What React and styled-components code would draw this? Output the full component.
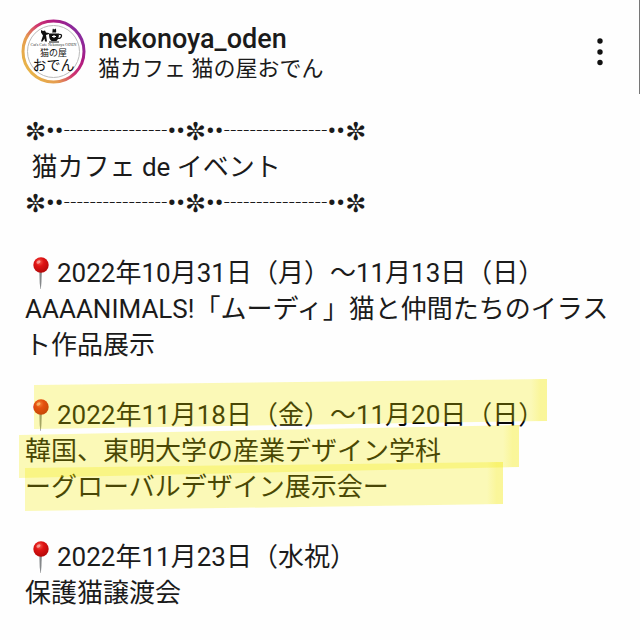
import React from 'react'
import styled, { createGlobalStyle } from 'styled-components'

const GlobalStyle = createGlobalStyle`
  * {
    box-sizing: border-box;
  }
  body {
    margin: 0;
    background: #fefefe;
    color: #1b1b1b;
    font-family: Roboto, "Noto Sans CJK JP", "DejaVu Sans", sans-serif;
  }
`

const Page = styled.div`
  position: relative;
  overflow: hidden;
`

const Header = styled.header`
  display: flex;
  align-items: flex-start;
  gap: 12px;
  padding: 19px 24px 0 21px;
  height: 113px;
`

const AvatarSvg = styled.svg`
  width: 65px;
  height: 65px;
  flex: none;
`

const Names = styled.div`
  flex: 1;
  min-width: 0;
  padding-top: 5px;
`

const UserName = styled.h1`
  margin: 0;
  font-size: 27px;
  line-height: 30px;
  font-weight: 500;
`

const SubTitle = styled.p`
  margin: 0;
  font-size: 22px;
  line-height: 30px;
`

const MenuButton = styled.button`
  width: 32px;
  height: 44px;
  margin-top: 11px;
  padding: 0;
  border: none;
  background: none;
  color: #111;
  cursor: pointer;
`

const Post = styled.main`
  display: flex;
  flex-direction: column;
  gap: 34px;
  padding: 0 24px 28px 25px;
`

const Block = styled.section`
  position: relative;
  font-size: 26px;
  line-height: 36px;
  color: ${(p) => (p.$marked ? '#080808' : 'inherit')};
`

const Line = styled.p`
  margin: 0;
  height: 36px;
  white-space: pre;
`

const OrnamentLine = styled(Line)`
  line-height: 32px;
`

const Asterisk = styled.span`
  font-family: "DejaVu Sans", sans-serif;
  font-size: 25px;
`

const Dashes = styled.span`
  font-family: "Noto Sans CJK JP", sans-serif;
`

const PinSvg = styled.svg`
  width: 32px;
  height: 36px;
  vertical-align: top;
`

const Marker = styled.svg`
  position: absolute;
  left: -25px;
  top: -20px;
  width: 560px;
  height: 140px;
  pointer-events: none;
`

const ScrollMark = styled.div`
  position: absolute;
  top: 0;
  right: 0;
  width: 1px;
  height: 94px;
  background: #777;
`

const Avatar = () => (
  <AvatarSvg viewBox="0 0 65 65" role="img" aria-label="nekonoya_oden">
    <defs>
      <linearGradient id="ring" x1="0.05" y1="0.8" x2="0.9" y2="0.2">
        <stop offset="0" stopColor="#e8b548" />
        <stop offset="0.3" stopColor="#e59a50" />
        <stop offset="0.55" stopColor="#d0366f" />
        <stop offset="0.8" stopColor="#b01a80" />
        <stop offset="1" stopColor="#8a2a9c" />
      </linearGradient>
    </defs>
    <circle cx="32.5" cy="32.5" r="30.5" fill="#fff" stroke="url(#ring)" strokeWidth="3" />
    <circle cx="32.5" cy="32.5" r="26" fill="none" stroke="#bbb" strokeWidth="1" />
    {/* cat leaning on the cup */}
    <path d="M20 11l2 1 2-0.500 1 2 3 0.500v1l-3 1 1 6.500h-2l-0.500-3-2 3h-1.500l2-6-2-3z" fill="#111" />
    <path d="M28 14.500h10c0 4-1 6-2.500 7.500h-5c-2-1.500-2.500-3.500-2.500-7.500z" fill="#111" />
    <path d="M38 15.500c4-1 3 4-1 4" fill="none" stroke="#111" strokeWidth="1.200" />
    <path d="M31 13.500c1-1 0-2.500 1-4l1 1 2-1c0 2 0.500 3 0 4z" fill="#111" />
    <path d="M28 23h10" stroke="#111" strokeWidth="1" />
    <path d="M31 17.500h4M33 16v3" stroke="#fff" strokeWidth="1" />
    <text x="32.5" y="27" fontSize="4" textAnchor="middle" fill="#333" fontFamily="Liberation Serif, serif">Cat's Cafe Nekonoya ODEN</text>
    <text x="32.5" y="37" fontSize="9" textAnchor="middle" fill="#111" fontFamily="Noto Sans CJK JP, sans-serif">猫の屋</text>
    <text x="32.5" y="51" fontSize="14" textAnchor="middle" fill="#111" fontFamily="Noto Sans CJK JP, sans-serif">おでん</text>
  </AvatarSvg>
)

const Pin = () => (
  <PinSvg viewBox="0 0 32 36" aria-hidden="true">
    <defs>
      <radialGradient id="pinHead" cx="0.4" cy="0.3" r="0.7">
        <stop offset="0" stopColor="#f4594a" />
        <stop offset="0.4" stopColor="#df1414" />
        <stop offset="1" stopColor="#b50909" />
      </radialGradient>
    </defs>
    <path d="M14.300 15h2.600l-0.500 13-0.600 6h-0.400l-0.700-6z" fill="#85888a" />
    <circle cx="16" cy="10" r="7.700" fill="url(#pinHead)" />
    <ellipse cx="13.500" cy="7" rx="2.200" ry="1.500" fill="#fff" opacity="0.45" transform="rotate(-35 13.500 7)" />
  </PinSvg>
)

const Divider = () => (
  <OrnamentLine>
    <Asterisk>✼</Asterisk>••<Dashes>┈┈┈┈</Dashes>••
    <Asterisk>✼</Asterisk>••<Dashes>┈┈┈┈</Dashes>••
    <Asterisk>✼</Asterisk>
  </OrnamentLine>
)

// three pen strokes, each with a wetter right end
const strokes = [
  { body: '34,18 547,12 547,54 34,62', end: '531,12 547,12 547,54 531,54' },
  { body: '19,68 519,58 519,100 19,111', end: '503,58 519,58 519,100 503,100' },
  { body: '25,101 503,95 503,137 25,144', end: '487,95 503,95 503,137 487,137' },
]

const Highlight = () => (
  <Marker viewBox="0 10 560 140" aria-hidden="true">
    <defs>
      <linearGradient id="wet" x1="0" x2="1" y1="0" y2="0">
        <stop offset="0" stopColor="#f4e600" stopOpacity="0" />
        <stop offset="0.6" stopColor="#f4e600" stopOpacity="0.16" />
        <stop offset="1" stopColor="#f4e600" stopOpacity="0.16" />
      </linearGradient>
    </defs>
    {strokes.map((s) => (
      <g key={s.body}>
        <polygon points={s.body} fill="#f6ee00" opacity="0.28" />
        <polygon points={s.end} fill="url(#wet)" />
      </g>
    ))}
  </Marker>
)

const App = () => {
  return (
    <Page>
      <GlobalStyle />
      <Header>
        <Avatar />
        <Names>
          <UserName>nekonoya_oden</UserName>
          <SubTitle>猫カフェ 猫の屋おでん</SubTitle>
        </Names>
        <MenuButton type="button" aria-label="メニュー">
          <svg width="32" height="44" viewBox="0 0 32 44" fill="currentColor">
            <circle cx="16" cy="11" r="2.700" />
            <circle cx="16" cy="22" r="2.700" />
            <circle cx="16" cy="32.500" r="2.700" />
          </svg>
        </MenuButton>
      </Header>
      <Post>
        <Block>
          <Divider />
          <Line>{' 猫カフェ de イベント'}</Line>
          <Divider />
        </Block>
        <Block>
          <Line><Pin />2022年10月31日（月）～11月13日（日）</Line>
          <Line>AAAANIMALS!「ムーディ」猫と仲間たちのイラス</Line>
          <Line>ト作品展示</Line>
        </Block>
        <Block $marked>
          <Line><Pin />2022年11月18日（金）～11月20日（日）</Line>
          <Line>韓国、東明大学の産業デザイン学科</Line>
          <Line>ーグローバルデザイン展示会ー</Line>
          <Highlight />
        </Block>
        <Block>
          <Line><Pin />2022年11月23日（水祝）</Line>
          <Line>保護猫譲渡会</Line>
        </Block>
      </Post>
      <ScrollMark />
    </Page>
  )
}

export default App
